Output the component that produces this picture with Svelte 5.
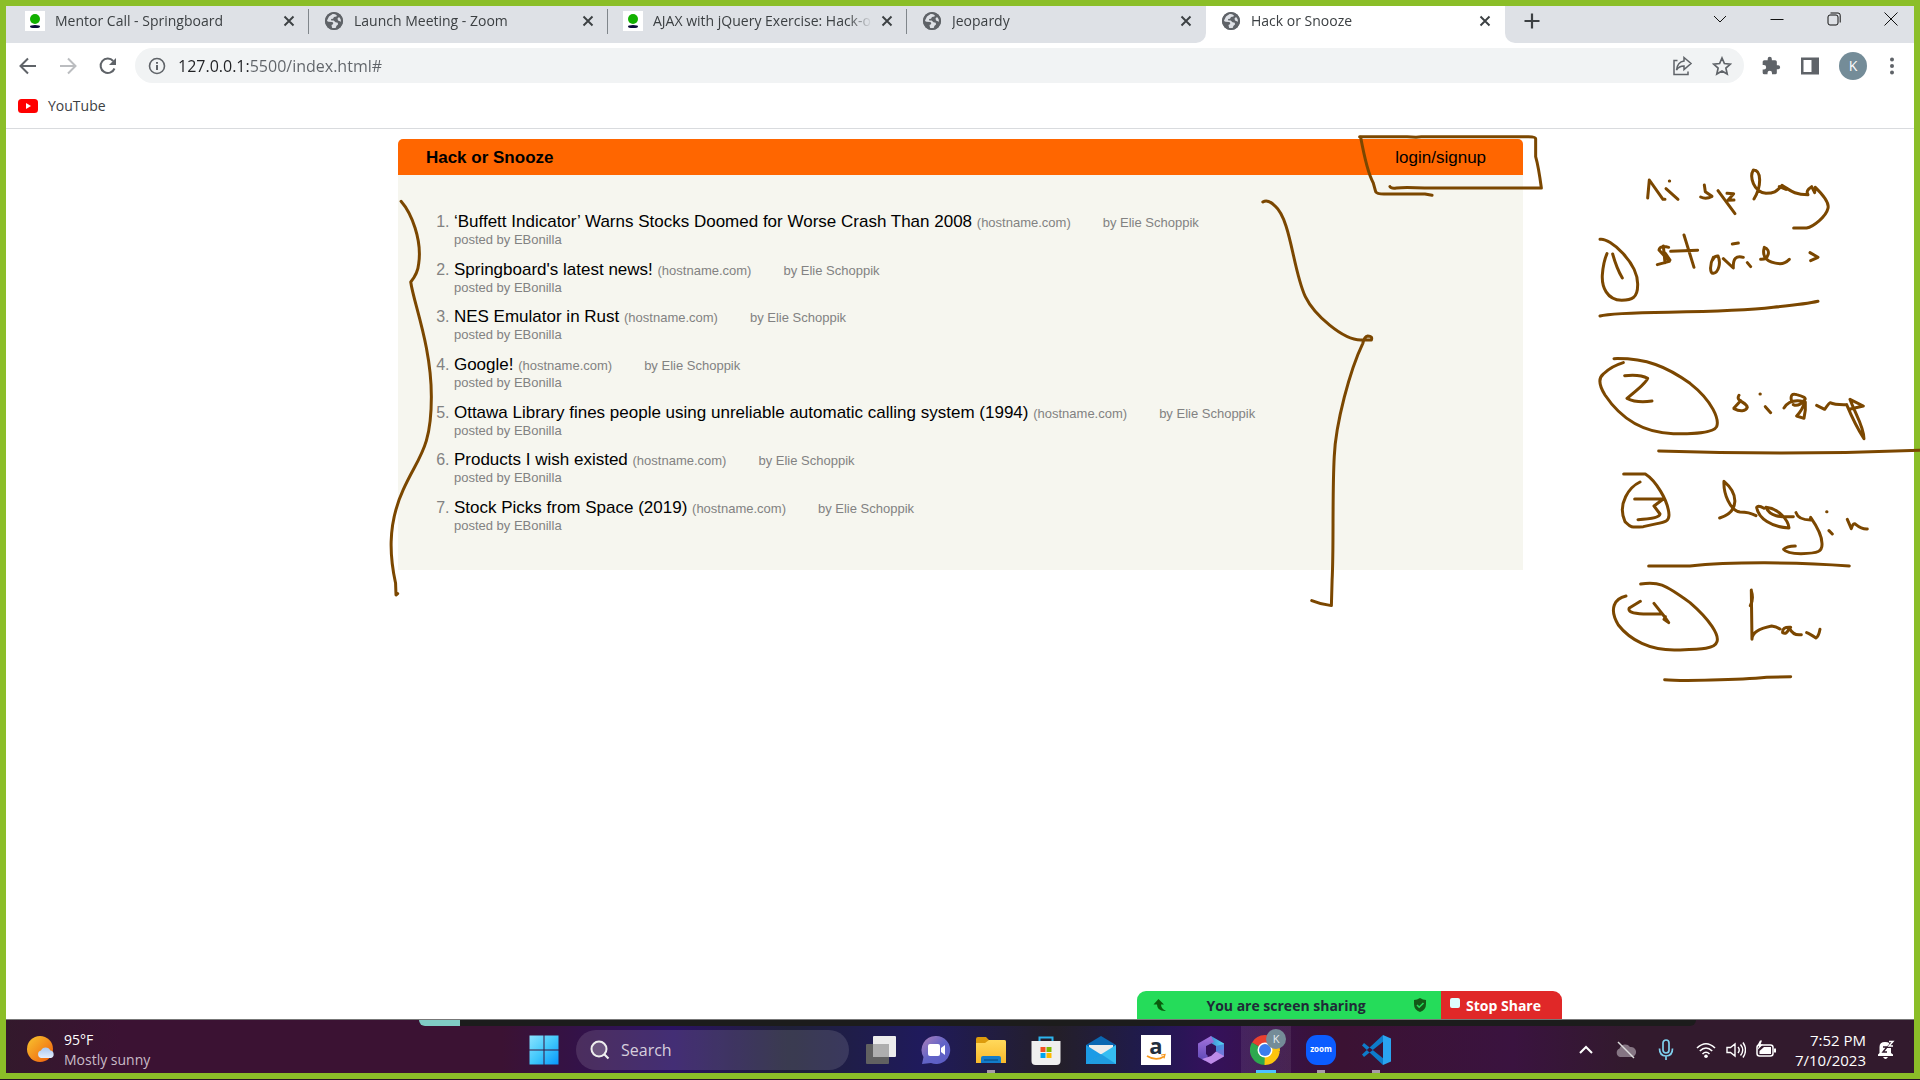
<script>
  const tabs = [
    { title: 'Mentor Call - Springboard', icon: 'board' },
    { title: 'Launch Meeting - Zoom', icon: 'globe' },
    { title: 'AJAX with jQuery Exercise: Hack-or-Snooze', icon: 'board' },
    { title: 'Jeopardy', icon: 'globe' },
  ];
  const stories = [
    '‘Buffett Indicator’ Warns Stocks Doomed for Worse Crash Than 2008',
    "Springboard's latest news!",
    'NES Emulator in Rust',
    'Google!',
    'Ottawa Library fines people using unreliable automatic calling system (1994)',
    'Products I wish existed',
    'Stock Picks from Space (2019)',
  ];
</script>

{#snippet favicon(kind)}
  {#if kind === 'board'}
    <svg class="fav" viewBox="0 0 20 20" aria-hidden="true">
      <rect width="20" height="20" fill="#fff" />
      <ellipse cx="10" cy="8" rx="5" ry="5" fill="#12b000" />
      <ellipse cx="10" cy="15.600" rx="5" ry="1.500" fill="#0b0b3b" />
    </svg>
  {:else}
    <svg class="fav" viewBox="0 0 20 20" aria-hidden="true">
      <circle cx="10" cy="10" r="9" fill="#5f6368" />
      <path d="M8.500 3 5 5.500 3 9.500q0 1 1.500 1.200L8 11q1.500.300 1.200 1.800-.400 1-1.700 1.200l.6 3q2 .6 3.900-.2l.3-1.800 1.700-1.500-.2-1.800-2.300-.4-1.800-1.800H7.300l-.3-1.500 2-.3 1-1.700 2.500-.5.3-1.300q-2-1.500-4.300-1.200z" fill="#dee1e6" />
      <path d="m15 6-1.500 1.500.5 2 3 1.300q.5-2.800-2-4.800z" fill="#dee1e6" />
      <circle cx="10" cy="10" r="8.200" fill="none" stroke="#5f6368" stroke-width="1.800" />
    </svg>
  {/if}
{/snippet}

{#snippet tab(title, icon)}
  <div class="tab">
    {@render favicon(icon)}
    <span class="tab-title">{title}</span>
    <button class="tab-close" aria-label="Close tab">
      <svg width="12" height="12" viewBox="0 0 12 12"><path d="m1.500 1.500 9 9m0-9-9 9" stroke="#3c4043" stroke-width="1.900" /></svg>
    </button>
  </div>
{/snippet}

<div class="screen">
  <div class="frame">
    <div class="strip">
      <div class="idle">
        {#each tabs as t}
          {@render tab(t.title, t.icon)}
        {/each}
      </div>
      <div class="active">{@render tab('Hack or Snooze', 'globe')}</div>
      <div class="rest">
        <button aria-label="New tab"><svg width="16" height="16" viewBox="0 0 16 16"><path d="M8 .5v15M.5 8h15" stroke="#3c4043" stroke-width="2.200" /></svg></button>
        <div class="window">
          <button aria-label="Search tabs"><svg width="16" height="16" viewBox="0 0 16 16"><path d="m2 5 6 6 6-6" /></svg></button>
          <button aria-label="Minimize"><svg width="16" height="16" viewBox="0 0 16 16"><path d="M1.500 8.500h13" /></svg></button>
          <button aria-label="Restore"><svg width="16" height="16" viewBox="0 0 16 16"><rect x="2" y="4" width="10" height="10" rx="2" /><path d="M4.500 2h7.500q2.200 0 2.200 2.200V11.500" /></svg></button>
          <button aria-label="Close"><svg width="16" height="16" viewBox="0 0 16 16"><path d="m1.500 1.500 13 13m0-13-13 13" /></svg></button>
        </div>
      </div>
    </div>

    <div class="toolbar">
      <div class="nav">
        <button aria-label="Back"><svg width="20" height="20" viewBox="0 0 20 20"><path d="M18 10H3m7-7.500L2.500 10l7.500 7.500" stroke="#5f6368" /></svg></button>
        <button aria-label="Forward"><svg width="20" height="20" viewBox="0 0 20 20"><path d="M2 10h15m-7-7.500 7.500 7.500-7.500 7.500" stroke="#bbbdc0" /></svg></button>
        <button aria-label="Reload"><svg width="20" height="20" viewBox="0 0 20 20"><path d="M16.500 12.500A7.200 7.200 0 1 1 15.200 5" stroke="#5f6368" /><path d="M18 2v7h-7z" fill="#5f6368" /></svg></button>
      </div>
      <div class="omni">
        <svg width="18" height="18" viewBox="0 0 18 18" fill="none" aria-hidden="true"><circle cx="9" cy="9" r="7.500" stroke="#5f6368" stroke-width="1.600" /><path d="M9 8v5M9 5v1.800" stroke="#5f6368" stroke-width="2" /></svg>
        <input class="url" aria-label="Address" value="127.0.0.1:5500/index.html#" />
        <button aria-label="Share"><svg width="22" height="20" viewBox="0 0 22 20"><path d="M6.500 4.500H3V18.500h14v-3M13 1.500l7 6-7 6v-3.500q-5 0-7.500 4Q6.500 6 13 5z" fill="none" stroke="#5f6368" stroke-width="1.500" /></svg></button>
        <button aria-label="Bookmark"><svg width="20" height="20" viewBox="0 0 20 20"><path d="m10 2 2.400 5.500 6 .6-4.500 4 1.300 5.900-5.200-3.100L4.800 18l1.300-5.900-4.500-4 6-.6z" fill="none" stroke="#5f6368" stroke-width="1.700" /></svg></button>
      </div>
      <div class="tools">
        <button aria-label="Extensions"><svg width="20" height="20" viewBox="0 0 24 24"><path d="M20.500 11H19V7a2 2 0 0 0-2-2h-4V3.500a2.500 2.500 0 0 0-5 0V5H4a2 2 0 0 0-2 2v3.800h1.500a2.700 2.700 0 0 1 0 5.400H2V20a2 2 0 0 0 2 2h3.800v-1.500a2.700 2.700 0 0 1 5.400 0V22H17a2 2 0 0 0 2-2v-4h1.500a2.500 2.500 0 0 0 0-5z" fill="#5f6368" /></svg></button>
        <button aria-label="Side panel"><svg width="20" height="20" viewBox="0 0 20 20"><path fill-rule="evenodd" d="M1 1.500h18v17H1zM3.500 4v12h8V4z" fill="#5f6368" /></svg></button>
        <button class="avatar" aria-label="Profile">K</button>
        <button aria-label="Menu"><svg width="20" height="20" viewBox="0 0 20 20" fill="#5f6368"><circle cx="10" cy="3.500" r="2" /><circle cx="10" cy="10" r="2" /><circle cx="10" cy="16.500" r="2" /></svg></button>
      </div>
    </div>

    <div class="bookmarks">
      <a href="#youtube">
        <svg width="20" height="14" viewBox="0 0 20 14" aria-hidden="true"><rect width="20" height="14" rx="3.500" fill="#f00" /><path d="M8 4v6l5-3z" fill="#fff" /></svg>
        YouTube
      </a>
    </div>

    <main>
      <div class="app">
        <nav class="top">
          <a class="brand" href="#home">Hack or Snooze</a>
          <a href="#login">login/signup</a>
        </nav>
        <ol>
          {#each stories as story}
            <li>
              <div><a href="#story">{story}</a> <small>(hostname.com)</small><small class="by">by Elie Schoppik</small></div>
              <small class="posted">posted by EBonilla</small>
            </li>
          {/each}
        </ol>
      </div>
    </main>

    <div class="share">
      <div class="sharing">
        <svg width="14" height="14" viewBox="0 0 14 14" aria-hidden="true"><path d="M5.500 1 11 6.500H8q0 4 5 6.500-9 .5-9-6.500H.5z" fill="#0a5c0d" /></svg>
        <span>You are screen sharing</span>
        <svg width="14" height="16" viewBox="0 0 14 16" aria-hidden="true"><path d="M7 1q3 1.800 6 2v4q0 6-6 8-6-2-6-8V3q3-.2 6-2z" fill="#135a17" /><path d="m4 8 2.200 2.200L10.500 6" stroke="#25dc5a" stroke-width="1.600" fill="none" /></svg>
      </div>
      <button class="stop"><i></i>Stop Share</button>
    </div>

    <footer>
      <div class="peek"><i></i></div>
      <div class="bar">
        <button class="weather">
          <svg width="30" height="30" viewBox="0 0 30 30" aria-hidden="true">
            <defs>
              <linearGradient id="sun" x1="0" y1="0" x2="1" y2="1"><stop offset="0" stop-color="#f9c62f" /><stop offset="1" stop-color="#ee5a0c" /></linearGradient>
              <linearGradient id="cloud" x1="0" y1="0" x2="0" y2="1"><stop offset="0" stop-color="#a9c8f2" /><stop offset="1" stop-color="#e4eefc" /></linearGradient>
            </defs>
            <circle cx="14" cy="14" r="13" fill="url(#sun)" /><path d="M15 23a3.800 3.800 0 0 1 0-7.400 5 5 0 0 1 9.300 0A3.800 3.800 0 0 1 25 23z" fill="url(#cloud)" />
          </svg>
          <span>95°F<br /><em>Mostly sunny</em></span>
        </button>

        <div class="apps">
          <button class="start" aria-label="Start"><svg width="30" height="30" viewBox="0 0 30 30">
            <defs><linearGradient id="win" x1="0" y1="0" x2="1" y2="1"><stop offset="0" stop-color="#8be3ff" /><stop offset=".5" stop-color="#42c8fb" /><stop offset="1" stop-color="#0795fb" /></linearGradient></defs>
            <path d="M.5.500h14v14H.5zM15.500.500h14v14h-14zM.5 15.500h14v14H.5zM15.500 15.500h14v14h-14z" fill="url(#win)" /></svg></button>
          <label class="search">
            <svg width="20" height="20" viewBox="0 0 20 20" aria-hidden="true"><circle cx="9" cy="9" r="7.500" fill="#ffffff30" stroke="#eee" stroke-width="2" /><path d="m14 14 4.500 4.500" stroke="#eee" stroke-width="2.200" /></svg>
            <input placeholder="Search" aria-label="Search" />
          </label>
          <button class="task" aria-label="Task view"><svg width="30" height="30" viewBox="0 0 30 30"><rect y="9" width="23" height="20" rx="1" fill="#616161" /><rect x="7" y="1" width="23" height="21" rx="1" fill="#ececec" /><path d="M7 9h16v13H7z" fill="#aeaeae" /></svg></button>
          <button class="task" aria-label="Chat"><svg width="30" height="30" viewBox="0 0 30 30">
            <defs><linearGradient id="chat" x1="0" y1="0" x2="1" y2="1"><stop offset="0" stop-color="#b080b8" /><stop offset=".5" stop-color="#6264c7" /><stop offset="1" stop-color="#5a5bc4" /></linearGradient></defs>
            <path d="M15 1a14 14 0 1 1-5 27l-9 1 1.500-7A14 14 0 0 1 15 1z" fill="url(#chat)" /><rect x="7" y="9" width="12" height="12" rx="2" fill="#fff" /><path d="m20 13 4-3v10l-4-3z" fill="#fff" /></svg></button>
          <button class="task open" aria-label="File Explorer"><svg width="30" height="30" viewBox="0 0 30 30">
            <defs><linearGradient id="folder" x1="0" y1="0" x2="0" y2="1"><stop offset="0" stop-color="#ffd95c" /><stop offset="1" stop-color="#f9b92b" /></linearGradient></defs>
            <path d="M0 4q0-2 2-2h8l3 3h15q2 0 2 2v10H0z" fill="#dc9b0c" /><path d="M0 8h9l4-3h15q2 0 2 2v21H0z" fill="url(#folder)" /><path d="M5 28v-5q0-2 2-2h16q2 0 2 2v5z" fill="#127ccb" /><path d="M8 25h14" stroke="#0a4d83" stroke-width="1.200" /></svg></button>
          <button class="task" aria-label="Microsoft Store"><svg width="30" height="30" viewBox="0 0 30 30"><path d="M8.500 7V2.500h13V7" fill="none" stroke="#2cb4ec" stroke-width="2" /><path d="M.5 6h29v20q0 4-4 4h-21q-4 0-4-4z" fill="#efefef" /><path d="M9.500 12h5v5h-5z" fill="#f25022" /><path d="M15.500 12h5v5h-5z" fill="#7fba00" /><path d="M9.500 18h5v5h-5z" fill="#00a4ef" /><path d="M15.500 18h5v5h-5z" fill="#ffb900" /></svg></button>
          <button class="task" aria-label="Mail"><svg width="30" height="30" viewBox="0 0 30 30"><path d="M0 10 15 1l15 9v5H0z" fill="#0a67b2" /><path d="M3 10h24v6L15 22 3 16z" fill="#ececec" /><path d="M0 10v19h30z" fill="#1c9be6" /><path d="M30 10v19H5l-5-.2z" fill="#35bdf2" /><path d="m0 29 15-10 15 10z" fill="#1386d6" opacity=".6" /></svg></button>
          <button class="task" aria-label="Amazon"><svg class="loose" width="30" height="30" viewBox="0 0 30 30"><rect width="30" height="30" fill="#fff" /><text class="amz" x="15" y="19" text-anchor="middle">a</text><path d="M6 21q9 5.500 17 .5" stroke="#f7981d" stroke-width="1.800" fill="none" /><path d="m20 20 4-.6-1 4" stroke="#f7981d" stroke-width="1.200" fill="none" /></svg></button>
          <button class="task" aria-label="Microsoft 365"><svg width="30" height="30" viewBox="0 0 30 30">
            <defs><linearGradient id="m365" x1="0" y1="0" x2="1" y2="0"><stop offset="0" stop-color="#3d6bc9" /><stop offset="1" stop-color="#54dcf5" /></linearGradient><linearGradient id="m365b" x1="0" y1="0" x2="0" y2="1"><stop offset="0" stop-color="#a573dd" /><stop offset="1" stop-color="#5c48b5" /></linearGradient></defs>
            <path d="m15 1 13 7.500V20l-8-4v-5l-5-3-5 3z" fill="url(#m365)" /><path d="M15 1 2 8.500V22l7 4 3-5-2-2v-8l8-4z" fill="url(#m365b)" /><path d="m6 24 9 5 13-7.500V14l-8 2.500-5 4.500z" fill="#bd8be8" /><path d="M28 9v12l-8-4.500V11z" fill="#4a72d4" opacity=".7" /></svg></button>
          <button class="task current" aria-label="Chrome"><svg width="36" height="36" viewBox="0 0 36 36">
            <path d="M15 21 2 13.500A15 15 0 0 1 28 13.500z" fill="#e8412f" /><path d="M15 21 2 13.500A15 15 0 0 0 15 36l6-11z" fill="#2da94f" /><path d="M15 21h14.800A15 15 0 0 1 14.500 36zM15 14h13a15 15 0 0 1 2 8l-9 1z" fill="#fdc50e" /><circle cx="15" cy="21" r="7.500" fill="#fff" /><circle cx="15" cy="21" r="6" fill="#3b7ded" /><circle cx="26" cy="10" r="10" fill="#748c98" /><text class="k" x="26" y="14" text-anchor="middle">K</text></svg></button>
          <button class="task open" aria-label="Zoom"><svg width="30" height="30" viewBox="0 0 30 30"><rect width="30" height="30" rx="11" fill="#0b5cff" /><text class="zm" x="15" y="17" text-anchor="middle">zoom</text></svg></button>
          <button class="task open" aria-label="Visual Studio Code"><svg width="30" height="30" viewBox="0 0 30 30"><path d="M1 10.500 3 8l20 16-1 6zM1 19.500 3 22 23 6l-1-6z" fill="#0d7ccb" /><path d="m22 0 8 3.500v23L22 30z" fill="#2aa4f0" /></svg></button>
        </div>

        <div class="tray">
          <button class="up" aria-label="Show hidden icons"><svg width="20" height="20" viewBox="0 0 20 20"><path d="m4 13 6-6 6 6" stroke="#fff" stroke-width="2" fill="none" /></svg></button>
          <button class="cl" aria-label="OneDrive"><svg width="22" height="20" viewBox="0 0 22 20"><path d="M5 17a4.500 4.500 0 0 1-.5-8.500A6 6 0 0 1 15 7a5 5 0 0 1 2 10z" fill="#857583" /><path d="m3 2 16 16" stroke="#ddd" stroke-width="1.500" /></svg></button>
          <button class="mi" aria-label="Microphone"><svg width="16" height="22" viewBox="0 0 16 22"><rect x="5" y="1" width="6" height="13" rx="3" /><path d="M1.500 9.500q0 7.500 6.500 7.500t6.500-7.500M8 17v4" /></svg></button>
          <button class="net" aria-label="Network, volume and battery">
            <svg width="20" height="20" viewBox="0 0 20 20"><path d="M1 8q9-8.500 18 0M3.800 11q6.200-6 12.400 0M6.500 14q3.500-3.500 7 0" stroke="#fff" stroke-width="1.600" fill="none" /><circle cx="10" cy="16.300" r="1.800" fill="#fff" /></svg>
            <svg width="20" height="20" viewBox="0 0 20 20"><path d="M1 7.500v5h3.500L9 16V4L4.500 7.500zM12 7q2.500 3 0 6M14.500 4.500q4.500 5.500 0 11M17 2.500q5 7.500 0 15" stroke="#fff" stroke-width="1.400" fill="none" /></svg>
            <svg width="20" height="20" viewBox="0 0 20 20"><rect x="1" y="5" width="16" height="11" rx="2.500" stroke="#fff" stroke-width="1.500" fill="none" /><path d="M8 7h7v7H3.500v-3zM18 8.500h2v4h-2zM4 .5 1 6h2L1.500 10 7 4.500H4.500L6 .5z" fill="#fff" /></svg>
          </button>
          <button class="clock">7:52 PM<br />7/10/2023</button>
          <button class="bell" aria-label="Notifications"><svg width="18" height="20" viewBox="0 0 18 20"><path d="M1 16v-1.500L2.500 13V7q0-5 5.500-5 6 0 6 5v6l2 1.500V16zM6 17h5q-2.500 4-5 0z" fill="#fff" /><path d="M6 7h4l-4 5h4" stroke="#311a2d" stroke-width="1.500" fill="none" /><path d="M12 2h4l-4 4.500h4" stroke="#311a2d" stroke-width="3" fill="none" /><path d="M12 1.500h4l-4 4.500h4" stroke="#fff" stroke-width="1.400" fill="none" /></svg></button>
        </div>
      </div>
    </footer>
  </div>

  <!-- Freehand notes drawn over the shared screen -->
  <svg class="ink" viewBox="0 0 1920 1080" aria-hidden="true">
    <g transform="translate(380 130) scale(.421 .3333)">
      <path d="M50 214C75 250 100 330 92 400Q90 430 73 456C80 520 122 650 122 800 122 960 90 980 55 1080 15 1190 25 1290 37 1360L38 1395l4-4" />
    </g>
    <g transform="translate(1000 130) scale(.3571 .3333)">
      <path d="M1010 22C1020 80 1030 130 1045 158L1052 185Q1056 192 1075 192H1190L1210 196" />
      <path d="M1007 20H1140L1165 22 1180 20H1480Q1500 20 1500 26V80Q1508 110 1516 174H1210C1160 174 1140 170 1110 174Q1095 176 1092 170" />
      <path d="M736 216Q750 206 770 228C815 270 820 420 855 500 880 555 960 630 1010 630H1040Q1044 618 1030 618 1020 620 1016 640C980 720 940 880 936 980 930 1100 935 1250 930 1350L928 1427Q900 1424 873 1412" />
    </g>
    <g transform="translate(1580 150) scale(.3333)">
      <path d="M203 144 208 90 249 148h6M268 93h1M258 116l36 32M373 105l3 20 20 14q-18 10-34 2M414 122l51 69M441 130l20 1-17 20 18-1" />
      <path d="M522 147C545 110 545 60 520 60 508 80 520 125 558 130 580 130 590 126 606 106 630 120 640 134 684 134Q676 122 695 110L704 128 706 112C735 140 748 160 744 175 738 200 700 230 680 234H641M598 110l20 8" />
      <path d="M60 268C90 262 175 340 173 405 173 445 155 450 125 451 80 450 65 410 67 375Q70 335 81 311M98 312Q110 355 127 384" />
      <path d="M266 292Q240 285 237 300L268 334 232 344M250 288l5 50M256 310l14 20M272 304 353 301M312 255 342 352M400 322C388 345 390 372 400 370 415 368 424 340 414 318Q404 316 398 330M430 326l30 28Q458 312 490 322M457 282l18-3M502 338l10 12M542 328C565 330 575 300 553 292 545 320 560 340 600 341Q615 341 628 328M690 308l24 14-22 10" />
      <path d="M60 498C120 480 400 494 580 472 620 468 680 462 714 454M102 626C200 624 260 650 330 700 400 755 418 810 410 830 400 850 340 852 280 851 180 848 115 795 75 735 50 695 60 680 70 672Q95 648 130 638" />
      <path d="M134 677Q180 672 203 685 198 700 141 745 170 760 216 753M477 736C465 755 500 755 502 772 498 784 480 786 462 776M462 774l20-22M540 732h1M556 770l16 18M612 774Q630 745 672 755M634 750Q630 728 650 734 682 742 674 750 655 772 640 764M674 756Q668 780 650 798L672 805 676 780V756M710 766l24 12Q748 758 750 758 765 765 800 764M800 764C815 800 835 840 852 866 852 830 825 790 810 748L850 768 808 778M236 903C500 912 800 910 1020 901" />
    </g>
    <g transform="translate(1580 440) scale(.3333)">
      <path d="M131 102H196C225 120 265 180 267 225 267 250 250 245 190 260 150 264 150 260 135 245 110 190 150 140 180 126M164 177H250L222 198 240 222Q238 236 174 239" />
      <path d="M419 234C480 215 475 160 432 124 430 160 450 212 480 216 500 216 515 220 528 227M552 205Q535 195 530 202C535 235 575 262 627 264 625 240 595 205 558 202 570 230 600 232 640 230M648 218Q655 240 692 240V232C715 265 726 290 726 310 728 335 715 340 663 341Q620 340 611 328 620 318 646 318M740 215h1M747 272l10 10M802 238l12 28Q820 245 828 254 845 268 862 267" />
      <path d="M206 378H330C450 365 650 366 808 378M182 432C235 425 250 430 330 488 390 540 418 585 411 605 405 628 360 628 290 630 210 632 150 600 115 555 85 505 105 475 138 468M181 484 148 504Q140 520 190 522H246M222 490l30 38 14 20-14-10 4-8" />
      <path d="M514 450 516 598Q515 570 575 558 590 560 600 567M514 452q8 25-3 45M632 562Q606 560 608 578 620 585 628 564 640 588 664 584M680 578Q690 582 708 594 716 590 720 568M254 719C300 724 480 720 560 712L632 710" />
    </g>
  </svg>
</div>

<style>
  :global(body) { margin: 0; }
  * { box-sizing: border-box; }
  button, input { font: inherit; color: inherit; border: 0; padding: 0; background: none; outline: 0; }
  button { display: flex; align-items: center; justify-content: center; cursor: pointer; flex: none; }
  a { color: inherit; text-decoration: none; }
  svg { display: block; flex: none; }
  .screen { position: relative; background: #251226; padding-bottom: 1px; font-family: 'Open Sans', 'Noto Sans', sans-serif; overflow: hidden; }
  .frame { display: flex; flex-direction: column; min-height: calc(100vh - 1px); border: 6px solid #8bbe28; background: #fff; }

  .strip { display: flex; height: 37px; font-size: 14px; color: #3c4043; }
  .idle { display: flex; padding-left: 4px; background: #dee1e6; border-bottom-right-radius: 10px; }
  .tab { display: flex; align-items: center; gap: 10px; width: 299px; height: 29px; padding: 0 14px 0 15px; }
  .idle .tab:not(:last-child) { background: linear-gradient(#80868b, #80868b) right 0 top 3px / 1px 25px no-repeat; }
  .fav { width: 20px; height: 20px; }
  .tab-title { flex: 1; overflow: hidden; white-space: nowrap; mask-image: linear-gradient(90deg, #000 195px, transparent 219px); }
  .rest { flex: 1; display: flex; justify-content: space-between; padding-left: 19px; background: #dee1e6; border-bottom-left-radius: 10px; }
  .rest > button { height: 30px; }
  .window { display: flex; height: 25px; padding-right: 9px; margin-right: -14px; }
  .window button { width: 57px; }
  .window svg { fill: none; stroke: #111; stroke-width: 1; }

  .toolbar { display: flex; align-items: center; height: 45px; padding: 0 12px; }
  .nav { display: flex; gap: 20px; padding-right: 17px; }
  .nav svg path { stroke-width: 2; }
  .nav svg { fill: none; }
  .omni { flex: 1; display: flex; align-items: center; height: 35px; padding: 0 12px 0 13px; border-radius: 18px; background: #f1f3f4; }
  .omni button { margin-left: 19px; }
  .url { flex: 1; margin-left: 12px; font-size: 16px; color: transparent; background: linear-gradient(90deg, #202124 71px, #5f6368 71px); background-clip: text; -webkit-background-clip: text; }
  .tools { display: flex; align-items: center; gap: 19px; padding-left: 17px; }
  .tools button:last-child { margin-left: -4px; }
  .avatar { width: 28px; height: 28px; border-radius: 50%; background: #748c98; color: #fff; font-size: 14px; }

  .bookmarks { height: 41px; padding: 8px 12px; border-bottom: 1px solid #d9dbde; font-size: 14px; line-height: 20px; color: #3c4043; }
  .bookmarks a { display: inline-flex; align-items: center; gap: 10px; }

  main { flex: 1; padding: 10px 0 0 1px; font: 17px/20px 'Liberation Sans', Arial, sans-serif; color: #000; }
  .app { width: 59%; min-width: 800px; margin: 0 auto; }
  .top { display: flex; justify-content: space-between; align-items: center; height: 36px; padding: 2px 37px 0 28px; background: #f60; border-radius: 5px 5px 0 0; }
  .brand { font-weight: 700; }
  ol { display: flex; flex-direction: column; justify-content: space-between; min-height: 395px; margin: 0; padding: 37px 0 37px 56px; background: #f6f6ef; color: #828282; }
  li a { color: #000; }
  li::marker { color: #828282; font-size: 16px; }
  small { font-size: 13px; }
  .by { margin-left: 32px; }
  .posted { display: block; line-height: 14px; }

  .share { display: flex; height: 28px; margin-left: 1131px; font-size: 14px; font-weight: 700; }
  .sharing { display: flex; align-items: center; justify-content: space-between; width: 304px; padding: 0 14px 0 16px; background: #25dc5a; border-top-left-radius: 9px; color: #1f2a37; }
  .sharing span { margin-right: 8px; }
  .stop { width: 121px; padding-right: 12px; gap: 6px; background: #e02828; color: #fff; border-top-right-radius: 9px; }
  .stop i { width: 10px; height: 10px; border-radius: 2px; background: #dff; margin-bottom: 5px; }

  footer { border-top: 1px solid #777; background: linear-gradient(90deg, #33192c 0, #3b1233 6%, #3b1233 26%, #2a1262 35%, #1f2038 41%, #1f1a5c 48%, #241f28 55%, #1f1a50 60%, #34115c 63%, #3b1233 70%, #3a133f 79%, #321a2d 85%, #321a2d 100%); color: #fff; }
  .peek { width: 1277px; height: 6px; margin-left: 413px; background: #1c1c1c; border-radius: 0 0 9px 9px; overflow: hidden; }
  .peek i { display: block; width: 41px; height: 6px; background: #80cbc4; }
  .bar { display: grid; grid-template-columns: 1fr auto 1fr; height: 47px; font-size: 14px; line-height: 20px; }
  .weather { justify-self: start; gap: 8px; padding-left: 20px; text-align: left; }
  em { font-style: normal; color: #c9bbc7; }
  .apps { display: flex; align-items: center; padding-left: 12px; }
  .start { margin-right: 17px; }
  .search { display: flex; align-items: center; gap: 11px; width: 273px; height: 40px; margin-right: 4px; padding-left: 14px; border-radius: 20px; background: #ffffff1f; font-size: 16px; }
  .search input { width: 100%; }
  .search input::placeholder { color: #d6cfdd; opacity: 1; }
  .task { width: 55px; height: 47px; }
  .open { background: linear-gradient(#a79ba8, #a79ba8) bottom / 8px 3px no-repeat; }
  .current { background: linear-gradient(#4cc2ff, #4cc2ff) bottom / 20px 3px no-repeat, linear-gradient(#ffffff14, #ffffff14) center / 50px 47px no-repeat; }
  .current svg { margin: 0 0 5px 5px; }
  .loose { overflow: visible; }
  .amz { font: 700 22px 'Open Sans', sans-serif; fill: #232f3e; }
  .k { font: 11px 'Open Sans', sans-serif; fill: #e5ebee; }
  .zm { font: 700 8px 'Open Sans', sans-serif; fill: #fff; }
  .tray { display: flex; align-items: center; justify-content: end; padding-right: 19px; }
  .up { margin-right: 19px; }
  .cl { margin-right: 21px; }
  .mi { margin-right: 22px; }
  .mi svg { fill: none; stroke: #7fd0ee; stroke-width: 1.700; }
  .net { gap: 10px; }
  .clock { width: 90px; justify-content: end; text-align: right; margin-right: 11px; font-size: 15px; }

  .ink { position: absolute; inset: 0; width: 100%; pointer-events: none; }
  .ink path { fill: none; stroke: #7b4700; stroke-width: 3px; stroke-linecap: round; stroke-linejoin: round; vector-effect: non-scaling-stroke; }
</style>
